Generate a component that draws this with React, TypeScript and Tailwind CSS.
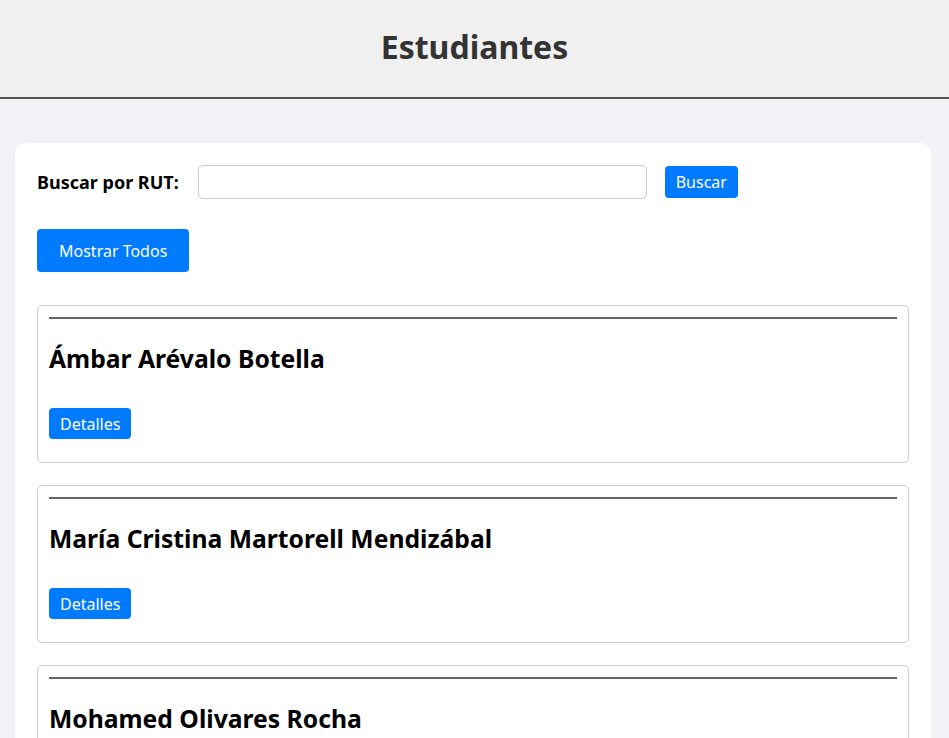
const students = [
  "Ámbar Arévalo Botella",
  "María Cristina Martorell Mendizábal",
  "Mohamed Olivares Rocha",
  "Rodrigo Fuentes Salinas",
];

const StudentCard = ({ name }: { name: string }) => (
  <div className="rounded-[5px] border border-[#ccc] px-[11px] pt-[11px] pb-[23px]">
    <hr className="h-0 border-t-2 border-[#666]" />
    <h2 className="mt-[25px] text-[24.7px] leading-[29px] font-bold text-black">
      {name}
    </h2>
    <button
      type="button"
      className="mt-[35px] h-[31px] rounded-[4px] bg-[#007bff] px-[11px] text-[16px] text-white"
    >
      Detalles
    </button>
  </div>
);

const App = () => (
  <div className="min-h-screen bg-[#f0f2f5] font-['Noto_Sans',sans-serif]">
    <header className="flex h-[99px] items-center justify-center border-b-2 border-[#555] bg-[#f0f0f0] pb-1">
      <h1 className="text-[32px] font-bold text-[#333]">Estudiantes</h1>
    </header>

    <main className="pt-[44px] pr-[18px] pl-[15px]">
      <div className="rounded-[10px] bg-white px-[22px] pt-[22px] pb-[22px]">
        <div className="flex items-center">
          <label className="text-[18px] font-bold text-black">
            Buscar por RUT:
          </label>
          <input
            type="text"
            className="ml-[19px] h-[34px] w-[449px] rounded-[5px] border border-[#ccc] bg-white px-2"
          />
          <button
            type="button"
            className="ml-[18px] h-[32px] rounded-[4px] bg-[#007bff] px-[11px] text-[16px] text-white"
          >
            Buscar
          </button>
        </div>

        <button
          type="button"
          className="mt-[30px] h-[43px] rounded-[4px] bg-[#007bff] px-[22px] text-[16px] text-white"
        >
          Mostrar Todos
        </button>

        <div className="mt-[33px] flex flex-col gap-[22px]">
          {students.map((s) => (
            <StudentCard key={s} name={s} />
          ))}
        </div>
      </div>
    </main>
  </div>
);

export default App;
